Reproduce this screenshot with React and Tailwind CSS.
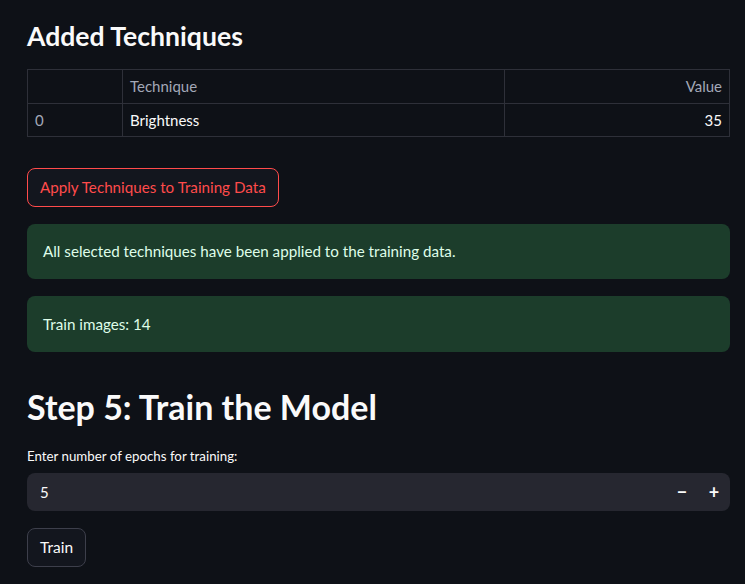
import React from "react";

const rows = [{ idx: 0, technique: "Brightness", value: 35 }];

export default function App() {
  return (
    <div
      className="w-full min-h-screen bg-[#0e1117] text-[#fafafa] px-[27px] pt-[18px]"
      style={{ fontFamily: "Lato, 'Open Sans', sans-serif" }}
    >
      <h3 className="text-[26.6px] font-bold leading-[36px] mb-[15px]">Added Techniques</h3>

      <table className="w-[703px] border-collapse text-[15px]">
        <thead>
          <tr className="h-[34px]">
            <th className="w-[95px] border border-[#2e3039] font-normal" />
            <th className="w-[382px] border border-[#2e3039] px-[7px] text-left font-normal text-[#a3a8b8]">
              Technique
            </th>
            <th className="border border-[#2e3039] px-[7px] text-right font-normal text-[#a3a8b8]">
              Value
            </th>
          </tr>
        </thead>
        <tbody>
          {rows.map((r) => (
            <tr key={r.idx} className="h-[33px]">
              <td className="border border-[#2e3039] px-[7px] text-[#a3a8b8]">{r.idx}</td>
              <td className="border border-[#2e3039] px-[7px]">{r.technique}</td>
              <td className="border border-[#2e3039] px-[7px] text-right">{r.value}</td>
            </tr>
          ))}
        </tbody>
      </table>

      <button className="mt-[31px] h-[39px] px-[12px] rounded-[8px] border border-[#ff4b4b] bg-[#13161e] text-[#ff4b4b] text-[15.2px]">
        Apply Techniques to Training Data
      </button>

      <div className="mt-[17px] flex flex-col gap-[17px] w-[703px]">
        <div className="h-[55px] rounded-[8px] bg-[#1c3d2b] px-[16px] flex items-center text-[15.2px] text-[#dffde9]">
          All selected techniques have been applied to the training data.
        </div>
        <div className="h-[56px] rounded-[8px] bg-[#1c3d2b] px-[16px] flex items-center text-[15.2px] text-[#dffde9]">
          Train images: 14
        </div>
      </div>

      <h2 className="mt-[31px] text-[34px] font-bold leading-[48px]">Step 5: Train the Model</h2>

      <div className="mt-[16px] text-[13.3px] leading-[18px]">Enter number of epochs for training:</div>
      <div className="mt-[8px] w-[703px] h-[38px] rounded-[8px] bg-[#262730] flex items-center pl-[13px]">
        <span className="flex-1 text-[15px]">5</span>
        <span className="w-[32px] text-center text-[18px] font-bold">−</span>
        <span className="w-[32px] text-center text-[18px] font-bold">+</span>
      </div>

      <button className="mt-[17px] h-[39px] px-[12px] rounded-[8px] border border-[#3d3f4b] bg-[#13161e] text-[15.5px]">
        Train
      </button>
    </div>
  );
}
